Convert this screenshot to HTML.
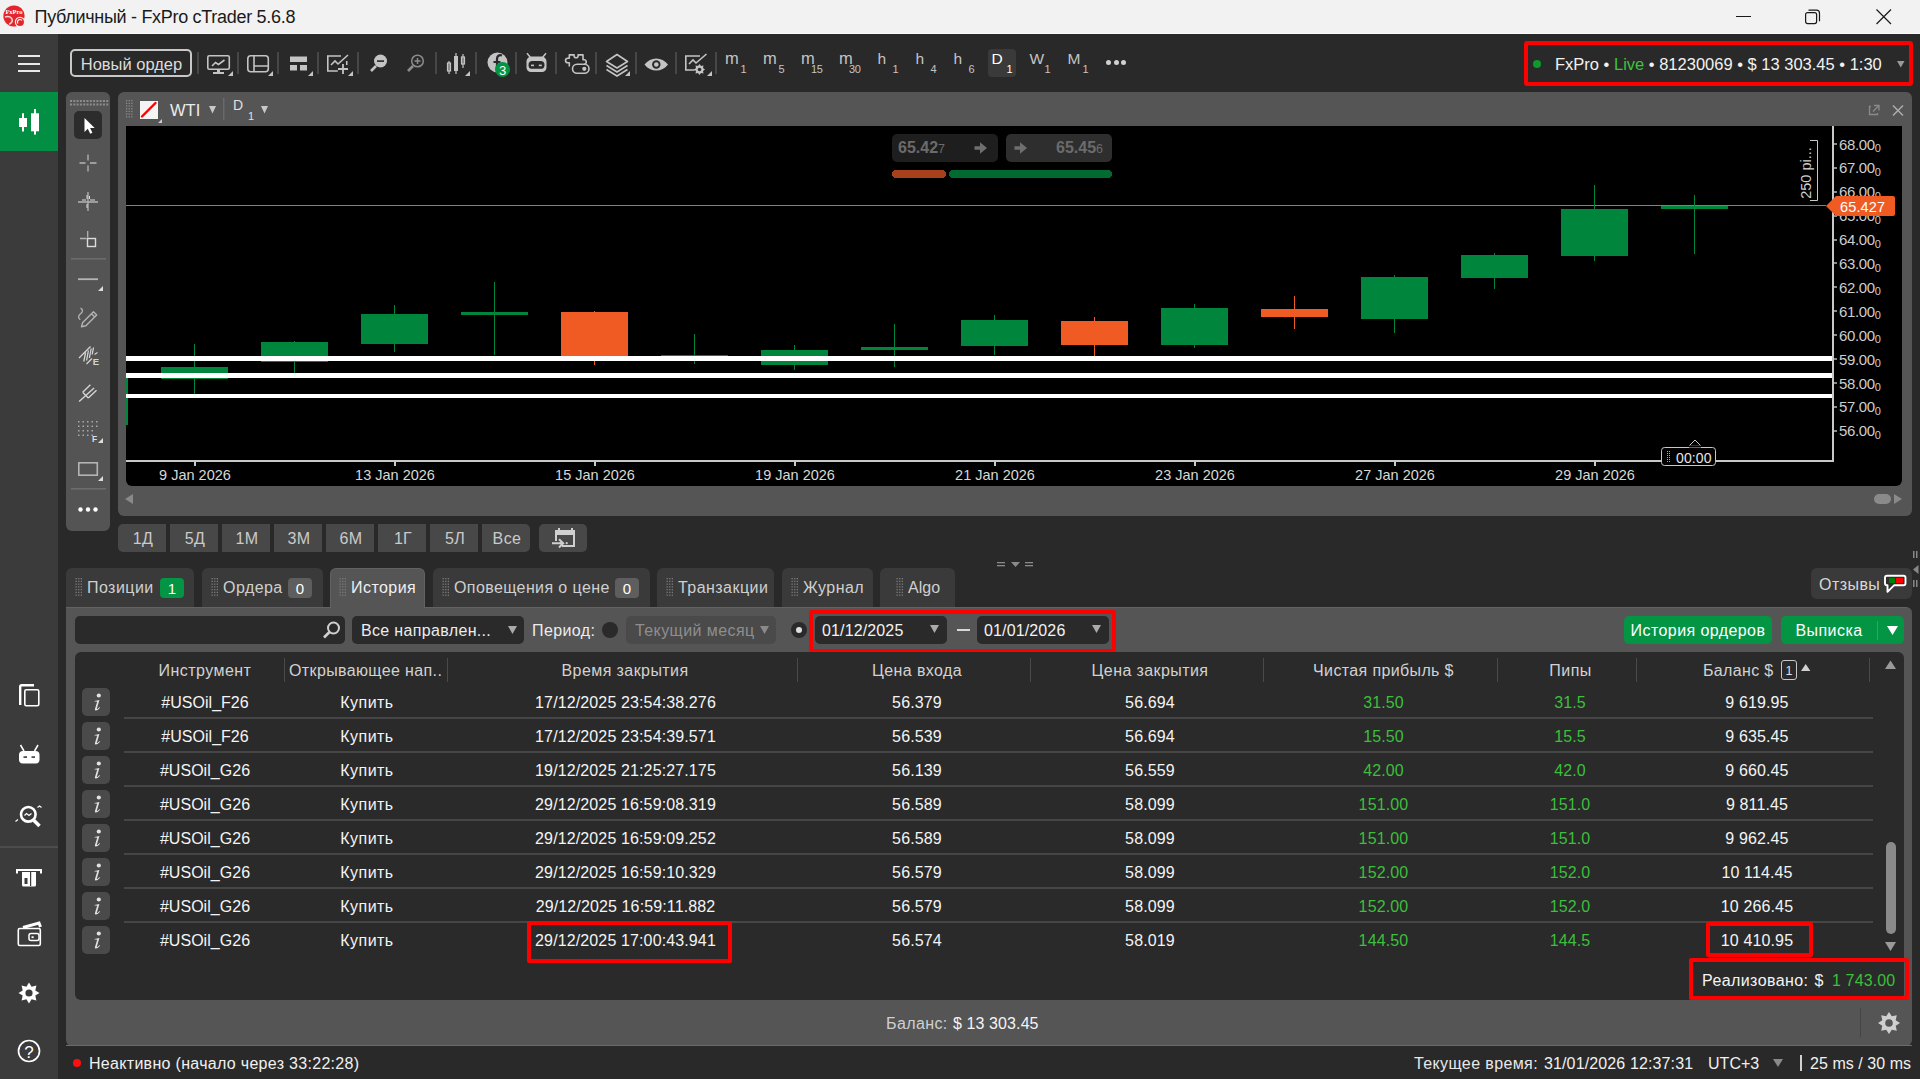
<!DOCTYPE html>
<html><head><meta charset="utf-8">
<style>
*{box-sizing:border-box;margin:0;padding:0}
html,body{width:1920px;height:1079px;overflow:hidden;background:#292929;font-family:"Liberation Sans",sans-serif;color:#e6e6e6}
.a{position:absolute}
.t{position:absolute;white-space:nowrap}
svg{position:absolute;overflow:visible}
</style></head><body>
<div class="a" style="left:0px;top:0px;width:1920px;height:33px;background:#f2f2f2;"></div>
<div class="a" style="left:0px;top:33px;width:1920px;height:1px;background:#fafafa;"></div>
<div class="t" style="left:34.5px;top:5.0px;height:24px;line-height:24px;font-size:18px;color:#1a1a1a;letter-spacing:-0.3px;">Публичный - FxPro cTrader 5.6.8</div>
<svg style="left:0;top:0" width="34" height="34" viewBox="0 0 34 34"><circle cx="14" cy="16.5" r="11" fill="#d9d9d9" opacity=".5"/><circle cx="14" cy="16" r="10.6" fill="#e3262b"/><text x="14" y="13.5" font-size="6.5" font-family="Liberation Serif" font-weight="bold" fill="#fff" text-anchor="middle">FxPro</text><path d="M5 17c3-1 6 0 7 2s-1 5-3 5" stroke="#f4d0d0" stroke-width="1.6" fill="none"/><circle cx="20" cy="22" r="4.6" fill="#e3262b" stroke="#f2f2f2" stroke-width="1.3"/><path d="M18 23.5a2.5 2.5 0 0 1 4-3" stroke="#fff" stroke-width="1.2" fill="none"/></svg>
<div class="a" style="left:1736px;top:16px;width:15px;height:1px;background:#1a1a1a;"></div>
<svg style="left:1805px;top:9px" width="16" height="16" viewBox="0 0 16 16"><rect x="0.6" y="3.6" width="11" height="11" rx="2" fill="none" stroke="#1a1a1a" stroke-width="1.2"/><path d="M3.5 1.2h8a3 3 0 0 1 3 3v8" fill="none" stroke="#1a1a1a" stroke-width="1.2"/></svg>
<svg style="left:1876px;top:9px" width="16" height="16" viewBox="0 0 16 16"><path d="M0.5 0.5L15 15M15 0.5L0.5 15" stroke="#1a1a1a" stroke-width="1.2"/></svg>
<div class="a" style="left:0px;top:34px;width:58px;height:1045px;background:#3b3b3b;"></div>
<div class="a" style="left:18px;top:55px;width:22px;height:2px;background:#e8e8e8;"></div>
<div class="a" style="left:18px;top:63px;width:22px;height:2px;background:#e8e8e8;"></div>
<div class="a" style="left:18px;top:70px;width:22px;height:2px;background:#e8e8e8;"></div>
<div class="a" style="left:0px;top:92px;width:58px;height:59px;background:#028f43;"></div>
<svg style="left:19px;top:109px" width="20" height="26" viewBox="0 0 20 26"><rect x="3" y="4.3" width="2" height="18.2" fill="#fff"/><rect x="0" y="9" width="8" height="9" fill="#fff"/><rect x="15" y="0" width="2" height="25.6" fill="#fff"/><rect x="12" y="4.3" width="8" height="18" fill="#fff"/></svg>
<svg style="left:0;top:0" width="58" height="1079" viewBox="0 0 58 1079"><path d="M20.2 705V686.5a1.3 1.3 0 0 1 1.3-1.3H34" stroke="#fff" stroke-width="2.4" fill="none"/><rect x="24.8" y="689.8" width="14" height="16" rx="1.5" stroke="#fff" stroke-width="1.6" fill="none"/><rect x="19" y="751" width="20.5" height="12.5" rx="4" fill="#fff"/><path d="M20.5 745l3.5 6M38 745l-3.5 6" stroke="#fff" stroke-width="1.5"/><rect x="23.5" y="756.3" width="3.5" height="1.6" fill="#3b3b3b"/><rect x="31.5" y="756.3" width="3.5" height="1.6" fill="#3b3b3b"/><circle cx="28.3" cy="814.3" r="7.3" stroke="#fff" stroke-width="2.6" fill="none"/><path d="M33.5 820l6 6" stroke="#fff" stroke-width="3.6"/><path d="M24.5 815.5l2-2 2.5 2 2.5-2" stroke="#fff" stroke-width="1.2" fill="none"/><path d="M15.5 821.5l2.5-2M37.5 807.5l2-1.5 2 1.5" stroke="#fff" stroke-width="1.1" fill="none"/><rect x="0" y="846" width="58" height="2" fill="#4c4c4c"/><path d="M17 873.5v-3.5h24v3.5" stroke="#fff" stroke-width="2" fill="none"/><path d="M22 872h14v13a1.5 1.5 0 0 1-1.5 1.5h-11A1.5 1.5 0 0 1 22 885z" fill="#fff"/><rect x="24.5" y="878" width="3" height="6" fill="#3b3b3b"/><rect x="30" y="872" width="1.2" height="14" fill="#3b3b3b"/><path d="M23 927.5l16-4.5 1.5 4" stroke="#fff" stroke-width="3" fill="none"/><rect x="18.3" y="928.5" width="22" height="17" rx="1.5" stroke="#fff" stroke-width="1.6" fill="#3b3b3b"/><rect x="29" y="933.5" width="10" height="7" rx="2" stroke="#fff" stroke-width="1.5" fill="#3b3b3b"/><rect x="31.5" y="936.3" width="2.2" height="1.8" fill="#fff"/><g transform="translate(29 993)"><path d="M0-10.5L2.6-6.3 7.4-7.4 6.3-2.6 10.5 0 6.3 2.6 7.4 7.4 2.6 6.3 0 10.5-2.6 6.3-7.4 7.4-6.3 2.6-10.5 0-6.3-2.6-7.4-7.4-2.6-6.3z" fill="#fff"/><circle r="3.6" fill="#3b3b3b"/></g><circle cx="29" cy="1051" r="10.5" stroke="#fff" stroke-width="1.7" fill="none"/><text x="29" y="1057.5" font-size="17" font-family="Liberation Sans" fill="#fff" text-anchor="middle">?</text></svg>
<div class="a" style="left:70px;top:49px;width:122px;height:28px;background:transparent;border:2px solid #c8c8c8;border-radius:5px"></div>
<div class="t" style="left:-68.5px;top:51.5px;height:24px;line-height:24px;font-size:16.5px;color:#dcdcdc;letter-spacing:0px;width:400px;text-align:center;">Новый ордер</div>
<div class="a" style="left:197px;top:52px;width:2px;height:22px;background:#474747;"></div>
<div class="a" style="left:237px;top:52px;width:2px;height:22px;background:#474747;"></div>
<div class="a" style="left:277px;top:52px;width:2px;height:22px;background:#474747;"></div>
<div class="a" style="left:317px;top:52px;width:2px;height:22px;background:#474747;"></div>
<div class="a" style="left:357px;top:52px;width:2px;height:22px;background:#474747;"></div>
<div class="a" style="left:435px;top:52px;width:2px;height:22px;background:#474747;"></div>
<div class="a" style="left:475px;top:52px;width:2px;height:22px;background:#474747;"></div>
<div class="a" style="left:515px;top:52px;width:2px;height:22px;background:#474747;"></div>
<div class="a" style="left:555px;top:52px;width:2px;height:22px;background:#474747;"></div>
<div class="a" style="left:595px;top:52px;width:2px;height:22px;background:#474747;"></div>
<div class="a" style="left:635px;top:52px;width:2px;height:22px;background:#474747;"></div>
<div class="a" style="left:675px;top:52px;width:2px;height:22px;background:#474747;"></div>
<div class="a" style="left:715px;top:52px;width:2px;height:22px;background:#474747;"></div>
<svg style="left:0;top:0" width="1200" height="92" viewBox="0 0 1200 92"><rect x="207.8" y="55.8" width="21.5" height="13.4" rx="1.5" stroke="#c4c4c4" stroke-width="1.6" fill="none"/><path d="M212 66l3.5-3.5 3 2 6-4.5" stroke="#c4c4c4" stroke-width="1.6" fill="none"/><rect x="217" y="69" width="3" height="3" fill="#c4c4c4"/><rect x="213" y="72" width="11" height="2" fill="#c4c4c4"/><path d="M228 76h5v-5z" fill="#c4c4c4"/><rect x="247.8" y="55.8" width="20.5" height="16" rx="3" stroke="#c4c4c4" stroke-width="1.6" fill="none"/><path d="M254 56v15.5M254 66h14" stroke="#c4c4c4" stroke-width="1.6"/><path d="M268 76h5v-5z" fill="#c4c4c4"/><rect x="290" y="56.5" width="17" height="5.5" fill="#c4c4c4"/><rect x="290" y="65" width="7" height="5.5" fill="#c4c4c4"/><rect x="300" y="65" width="7" height="5.5" fill="#c4c4c4"/><path d="M308 76h5v-5z" fill="#c4c4c4"/><path d="M341 56H327.8v15h10" stroke="#c4c4c4" stroke-width="1.6" fill="none"/><path d="M331 65l4-4 3 3 10-9" stroke="#c4c4c4" stroke-width="1.6" fill="none"/><path d="M343 64v10M338 69h10" stroke="#c4c4c4" stroke-width="1.8"/><rect x="346" y="61" width="1.5" height="4" fill="#c4c4c4"/><path d="M348 76h5v-5z" fill="#c4c4c4"/><circle cx="380.5" cy="61" r="6.5" fill="#c4c4c4"/><rect x="377" y="60.3" width="7" height="1.6" fill="#292929"/><path d="M376 66l-5 5" stroke="#c4c4c4" stroke-width="2.6"/><circle cx="417.5" cy="61" r="5.8" stroke="#8c8c8c" stroke-width="1.5" fill="none"/><path d="M414.5 61h6M417.5 58v6" stroke="#8c8c8c" stroke-width="1.5"/><path d="M413 66l-5 5" stroke="#8c8c8c" stroke-width="2.6"/><path d="M449 61v13M456 53v21M463 54v14" stroke="#c4c4c4" stroke-width="1.2"/><rect x="447.5" y="63" width="3" height="8" stroke="#c4c4c4" stroke-width="1.2" fill="none"/><rect x="454" y="56" width="4" height="15" fill="#c4c4c4"/><rect x="461.5" y="57" width="3" height="7" stroke="#c4c4c4" stroke-width="1.2" fill="none"/><path d="M465 76h5v-5z" fill="#c4c4c4"/><circle cx="497.5" cy="62.5" r="10" fill="#c4c4c4"/><path d="M502 55.5c-3-1-5 .5-5 3.5v11M493.5 62h7" stroke="#292929" stroke-width="2.2" fill="none"/><circle cx="502.5" cy="69.5" r="7.5" fill="#039444"/><text x="502.5" y="74.5" font-size="13" font-family="Liberation Sans" fill="#fff" text-anchor="middle">3</text><path d="M531.5 56.5h10a5 5 0 0 1 5 5v6a4.5 4.5 0 0 1-4.5 4.5h-11a4.5 4.5 0 0 1-4.5-4.5v-6a5 5 0 0 1 5-5z" fill="#c4c4c4"/><rect x="528.5" y="61" width="16" height="7.8" rx="3.9" fill="#292929"/><path d="M527 53.2l3.3 4M546 53.2l-3.3 4" stroke="#c4c4c4" stroke-width="1.5"/><rect x="531" y="64.6" width="3" height="1.6" fill="#c4c4c4"/><rect x="538.8" y="64.6" width="3" height="1.6" fill="#c4c4c4"/><path d="M569.3 66.5V62.8h-1.5a2.3 2.3 0 0 1 0-4.6h1.5v-3.3h4.8v.8a2 2 0 0 0 4 0v-.8h4.9v4.8h.8a2.3 2.3 0 0 1 .3 4.6" stroke="#c4c4c4" stroke-width="1.6" fill="none" stroke-linejoin="round"/><rect x="572.5" y="64.3" width="16.5" height="9" rx="4.5" stroke="#c4c4c4" stroke-width="1.6" fill="#292929"/><circle cx="584.3" cy="68.8" r="2.1" fill="#c4c4c4"/><path d="M606.5 61.5l10.5-7 10.5 7-10.5 6.5z" stroke="#c4c4c4" stroke-width="1.6" fill="none" stroke-linejoin="round"/><path d="M606.5 65.5l10.5 6.5 10.5-6.5M606.5 69.5l10.5 6.5 10.5-6.5" stroke="#c4c4c4" stroke-width="1.6" fill="none"/><path d="M625 76h5v-5z" fill="#c4c4c4"/><path d="M644.5 64.5c6-8 17.5-8 23.5 0-6 8-17.5 8-23.5 0z" fill="#c4c4c4"/><circle cx="656.3" cy="64.5" r="4.2" fill="#292929"/><circle cx="656.3" cy="64.5" r="2.3" fill="#c4c4c4"/><path d="M700 56H685.8v14h9" stroke="#c4c4c4" stroke-width="1.6" fill="none"/><path d="M689 64l4-4 3 3 10.5-9" stroke="#c4c4c4" stroke-width="1.6" fill="none"/><g transform="translate(699.5 69.5)"><path d="M0-5.5L1.5-3.5 4-4 3.5-1.5 5.5 0 3.5 1.5 4 4 1.5 3.5 0 5.5-1.5 3.5-4 4-3.5 1.5-5.5 0-3.5-1.5-4-4-1.5-3.5z" fill="#c4c4c4"/><circle r="1.8" fill="#292929"/></g><path d="M707 76h5v-5z" fill="#c4c4c4"/></svg>
<div class="a" style="left:988px;top:49px;width:28px;height:28px;background:#3a3a3a;border-radius:4px"></div>
<div class="t" style="left:725px;top:46.0px;height:24px;line-height:24px;font-size:16.5px;color:#c4c4c4;letter-spacing:0px;">m</div>
<div class="t" style="left:740.5px;top:56.8px;height:24px;line-height:24px;font-size:11px;color:#c4c4c4;letter-spacing:0px;">1</div>
<div class="t" style="left:763px;top:46.0px;height:24px;line-height:24px;font-size:16.5px;color:#c4c4c4;letter-spacing:0px;">m</div>
<div class="t" style="left:778.5px;top:56.8px;height:24px;line-height:24px;font-size:11px;color:#c4c4c4;letter-spacing:0px;">5</div>
<div class="t" style="left:801px;top:46.0px;height:24px;line-height:24px;font-size:16.5px;color:#c4c4c4;letter-spacing:0px;">m</div>
<div class="t" style="left:811px;top:56.8px;height:24px;line-height:24px;font-size:11px;color:#c4c4c4;letter-spacing:-0.4px;">15</div>
<div class="t" style="left:839px;top:46.0px;height:24px;line-height:24px;font-size:16.5px;color:#c4c4c4;letter-spacing:0px;">m</div>
<div class="t" style="left:849px;top:56.8px;height:24px;line-height:24px;font-size:11px;color:#c4c4c4;letter-spacing:-0.4px;">30</div>
<div class="t" style="left:877.5px;top:46.5px;height:24px;line-height:24px;font-size:15.5px;color:#c4c4c4;letter-spacing:0px;">h</div>
<div class="t" style="left:892.5px;top:56.8px;height:24px;line-height:24px;font-size:11px;color:#c4c4c4;letter-spacing:0px;">1</div>
<div class="t" style="left:915.5px;top:46.5px;height:24px;line-height:24px;font-size:15.5px;color:#c4c4c4;letter-spacing:0px;">h</div>
<div class="t" style="left:930.5px;top:56.8px;height:24px;line-height:24px;font-size:11px;color:#c4c4c4;letter-spacing:0px;">4</div>
<div class="t" style="left:953.5px;top:46.5px;height:24px;line-height:24px;font-size:15.5px;color:#c4c4c4;letter-spacing:0px;">h</div>
<div class="t" style="left:968.5px;top:56.8px;height:24px;line-height:24px;font-size:11px;color:#c4c4c4;letter-spacing:0px;">6</div>
<div class="t" style="left:991.5px;top:46.5px;height:24px;line-height:24px;font-size:15.5px;color:#ffffff;letter-spacing:0px;">D</div>
<div class="t" style="left:1006.5px;top:56.8px;height:24px;line-height:24px;font-size:11px;color:#ffffff;letter-spacing:0px;">1</div>
<div class="t" style="left:1029.5px;top:46.5px;height:24px;line-height:24px;font-size:15.5px;color:#c4c4c4;letter-spacing:0px;">W</div>
<div class="t" style="left:1044.5px;top:56.8px;height:24px;line-height:24px;font-size:11px;color:#c4c4c4;letter-spacing:0px;">1</div>
<div class="t" style="left:1067.5px;top:46.5px;height:24px;line-height:24px;font-size:15.5px;color:#c4c4c4;letter-spacing:0px;">M</div>
<div class="t" style="left:1082.5px;top:56.8px;height:24px;line-height:24px;font-size:11px;color:#c4c4c4;letter-spacing:0px;">1</div>
<div class="a" style="left:1106.0px;top:59.5px;width:5px;height:5px;border-radius:50%;background:#d0d0d0"></div>
<div class="a" style="left:1113.5px;top:59.5px;width:5px;height:5px;border-radius:50%;background:#d0d0d0"></div>
<div class="a" style="left:1121.0px;top:59.5px;width:5px;height:5px;border-radius:50%;background:#d0d0d0"></div>
<div class="a" style="left:1524px;top:41px;width:389px;height:45px;background:transparent;border:4px solid #ff0000;border-radius:3px"></div>
<div class="a" style="left:1533px;top:60px;width:8px;height:8px;border-radius:50%;background:#0c9a2c"></div>
<div class="t" style="left:1555px;top:52.0px;height:24px;line-height:24px;font-size:16.5px;color:#f2f2f2;letter-spacing:0px;">FxPro • <span style="color:#3ec43e">Live</span> • 81230069 • $ 13 303.45 • 1:30</div>
<svg style="left:1897px;top:61px" width="8" height="7"><path d="M0 0h7.5L3.75 6.5z" fill="#9a9a9a"/></svg>
<div class="a" style="left:66px;top:92px;width:44px;height:439px;background:#545454;border-radius:6px"></div>
<svg style="left:0;top:0" width="120" height="540" viewBox="0 0 120 540"><rect x="70.0" y="100" width="2" height="2" fill="#8c8c8c"/><rect x="70.0" y="103.5" width="2" height="2" fill="#8c8c8c"/><rect x="73.3" y="100" width="2" height="2" fill="#8c8c8c"/><rect x="73.3" y="103.5" width="2" height="2" fill="#8c8c8c"/><rect x="76.6" y="100" width="2" height="2" fill="#8c8c8c"/><rect x="76.6" y="103.5" width="2" height="2" fill="#8c8c8c"/><rect x="79.9" y="100" width="2" height="2" fill="#8c8c8c"/><rect x="79.9" y="103.5" width="2" height="2" fill="#8c8c8c"/><rect x="83.2" y="100" width="2" height="2" fill="#8c8c8c"/><rect x="83.2" y="103.5" width="2" height="2" fill="#8c8c8c"/><rect x="86.5" y="100" width="2" height="2" fill="#8c8c8c"/><rect x="86.5" y="103.5" width="2" height="2" fill="#8c8c8c"/><rect x="89.8" y="100" width="2" height="2" fill="#8c8c8c"/><rect x="89.8" y="103.5" width="2" height="2" fill="#8c8c8c"/><rect x="93.1" y="100" width="2" height="2" fill="#8c8c8c"/><rect x="93.1" y="103.5" width="2" height="2" fill="#8c8c8c"/><rect x="96.4" y="100" width="2" height="2" fill="#8c8c8c"/><rect x="96.4" y="103.5" width="2" height="2" fill="#8c8c8c"/><rect x="99.7" y="100" width="2" height="2" fill="#8c8c8c"/><rect x="99.7" y="103.5" width="2" height="2" fill="#8c8c8c"/><rect x="103.0" y="100" width="2" height="2" fill="#8c8c8c"/><rect x="103.0" y="103.5" width="2" height="2" fill="#8c8c8c"/><rect x="106.3" y="100" width="2" height="2" fill="#8c8c8c"/><rect x="106.3" y="103.5" width="2" height="2" fill="#8c8c8c"/><rect x="74" y="111" width="28" height="28" rx="5" fill="#2c2c2c"/><path d="M84.5 118v14l3.3-3.3 2.4 5 2.2-1-2.3-4.8h4.6z" fill="#fff"/><path d="M79.5 163h6M90 163h6.5M88 154.5v6M88 165.5v6" stroke="#b4b4b4" stroke-width="1.3"/><path d="M78 202h20M88 192v19" stroke="#b4b4b4" stroke-width="1.3"/><path d="M82 200h4M90 200h5M87 195v4M87 204v4M89.5 196v3" stroke="#ddd" stroke-width="1"/><path d="M80 238.5h6.5M87.7 231v6.5" stroke="#b4b4b4" stroke-width="1.3"/><rect x="87.5" y="238.5" width="8" height="8" stroke="#ddd" stroke-width="1.4" fill="none"/><rect x="71" y="258" width="35" height="1.6" fill="#6c6c6c"/><rect x="78" y="278.3" width="20" height="1.8" fill="#b4b4b4"/><path d="M98 291h5v-5z" fill="#ddd"/><path d="M80.5 308.2c3 1.5 2.5 4-.5 6-2 1.5-1.8 4 .3 5.5" stroke="#b4b4b4" stroke-width="1.3" fill="none"/><path d="M81.5 326.8l1.2-4.3 10.8-10.8 3.2 3.2-10.8 10.8z M91.5 313.7l3.2 3.2" stroke="#b4b4b4" stroke-width="1.4" fill="none" stroke-linejoin="round"/><path d="M79 358l11.5-11.5M86.5 364l5.5-5.5M83.8 361.5l1.8-9M86.6 360.5l1.8-10M89.4 358l1.8-9.5M92.2 354.5l1.3-7" stroke="#d4d4d4" stroke-width="1.3"/><path d="M94.5 354.5l3-2" stroke="#d4d4d4" stroke-width="1.1"/><text x="92.8" y="364.5" font-size="9.5" font-family="Liberation Sans" font-weight="bold" fill="#d4d4d4">E</text><path d="M79.1 401.5l15-13.6M82.7 392.3l5.6 5.7M82.7 392.3l7.7-7.6M88.3 398l8.2-7.7" stroke="#d4d4d4" stroke-width="1.4" fill="none"/><rect x="78.0" y="421.0" width="1.5" height="1.5" fill="#aaa"/><rect x="82.5" y="421.0" width="1.5" height="1.5" fill="#aaa"/><rect x="87.0" y="421.0" width="1.5" height="1.5" fill="#aaa"/><rect x="91.5" y="421.0" width="1.5" height="1.5" fill="#aaa"/><rect x="96.0" y="421.0" width="1.5" height="1.5" fill="#aaa"/><rect x="78.0" y="425.5" width="1.5" height="1.5" fill="#aaa"/><rect x="82.5" y="425.5" width="1.5" height="1.5" fill="#aaa"/><rect x="87.0" y="425.5" width="1.5" height="1.5" fill="#aaa"/><rect x="91.5" y="425.5" width="1.5" height="1.5" fill="#aaa"/><rect x="96.0" y="425.5" width="1.5" height="1.5" fill="#aaa"/><rect x="78.0" y="430.0" width="1.5" height="1.5" fill="#aaa"/><rect x="82.5" y="430.0" width="1.5" height="1.5" fill="#aaa"/><rect x="87.0" y="430.0" width="1.5" height="1.5" fill="#aaa"/><rect x="91.5" y="430.0" width="1.5" height="1.5" fill="#aaa"/><rect x="78.0" y="434.5" width="1.5" height="1.5" fill="#aaa"/><rect x="82.5" y="434.5" width="1.5" height="1.5" fill="#aaa"/><rect x="87.0" y="434.5" width="1.5" height="1.5" fill="#aaa"/><rect x="91.5" y="434.5" width="1.5" height="1.5" fill="#aaa"/><text x="92" y="442" font-size="8.5" font-family="Liberation Sans" font-weight="bold" fill="#ddd">F</text><path d="M98 443h5v-5z" fill="#ddd"/><rect x="78.8" y="462.8" width="18.5" height="12.4" stroke="#b4b4b4" stroke-width="1.6" fill="none"/><path d="M98 481h5v-5z" fill="#ddd"/><rect x="71" y="488" width="35" height="1.6" fill="#6c6c6c"/><circle cx="80.5" cy="509.5" r="2.2" fill="#fff"/><circle cx="88" cy="509.5" r="2.2" fill="#fff"/><circle cx="95.5" cy="509.5" r="2.2" fill="#fff"/></svg>
<div class="a" style="left:118px;top:92px;width:1794px;height:424px;background:#555555;border-radius:6px"></div>
<svg style="left:0;top:0" width="1920" height="130" viewBox="0 0 1920 130"><rect x="126.0" y="100.0" width="1.3" height="1.3" fill="#8a8a8a"/><rect x="126.0" y="102.7" width="1.3" height="1.3" fill="#8a8a8a"/><rect x="126.0" y="105.4" width="1.3" height="1.3" fill="#8a8a8a"/><rect x="126.0" y="108.1" width="1.3" height="1.3" fill="#8a8a8a"/><rect x="126.0" y="110.8" width="1.3" height="1.3" fill="#8a8a8a"/><rect x="126.0" y="113.5" width="1.3" height="1.3" fill="#8a8a8a"/><rect x="126.0" y="116.2" width="1.3" height="1.3" fill="#8a8a8a"/><rect x="128.6" y="100.0" width="1.3" height="1.3" fill="#8a8a8a"/><rect x="128.6" y="102.7" width="1.3" height="1.3" fill="#8a8a8a"/><rect x="128.6" y="105.4" width="1.3" height="1.3" fill="#8a8a8a"/><rect x="128.6" y="108.1" width="1.3" height="1.3" fill="#8a8a8a"/><rect x="128.6" y="110.8" width="1.3" height="1.3" fill="#8a8a8a"/><rect x="128.6" y="113.5" width="1.3" height="1.3" fill="#8a8a8a"/><rect x="128.6" y="116.2" width="1.3" height="1.3" fill="#8a8a8a"/><rect x="131.2" y="100.0" width="1.3" height="1.3" fill="#8a8a8a"/><rect x="131.2" y="102.7" width="1.3" height="1.3" fill="#8a8a8a"/><rect x="131.2" y="105.4" width="1.3" height="1.3" fill="#8a8a8a"/><rect x="131.2" y="108.1" width="1.3" height="1.3" fill="#8a8a8a"/><rect x="131.2" y="110.8" width="1.3" height="1.3" fill="#8a8a8a"/><rect x="131.2" y="113.5" width="1.3" height="1.3" fill="#8a8a8a"/><rect x="131.2" y="116.2" width="1.3" height="1.3" fill="#8a8a8a"/><rect x="140" y="101" width="18" height="18" fill="#f4f4f4"/><path d="M142 116.5l13.5-13.5" stroke="#ff0000" stroke-width="2.4" stroke-linecap="round"/><path d="M158 123h4v-4z" fill="#ccc"/><path d="M209 106h7l-3.5 7.5z" fill="#c8c8c8"/><rect x="223" y="98" width="1.5" height="22" fill="#6a6a6a"/><path d="M261 106h7l-3.5 7.5z" fill="#c8c8c8"/><path d="M1871 106.5h-1.5v8h8V113M1874 105.5h5v5M1879 105.5l-6 6" stroke="#8a8a8a" stroke-width="1.3" fill="none"/><path d="M1893 105.5l10 10M1903 105.5l-10 10" stroke="#aaaaaa" stroke-width="1.6"/></svg>
<div class="t" style="left:170px;top:98.0px;height:24px;line-height:24px;font-size:16.5px;color:#ececec;letter-spacing:0.0px;">WTI</div>
<div class="t" style="left:233px;top:93.0px;height:24px;line-height:24px;font-size:14px;color:#e0e0e0;letter-spacing:0.0px;">D</div>
<div class="t" style="left:248px;top:104.0px;height:24px;line-height:24px;font-size:11px;color:#e0e0e0;letter-spacing:0px;">1</div>
<div class="a" style="left:126px;top:126px;width:1776px;height:360px;background:#000;border-radius:0 0 6px 6px"></div>
<svg style="left:0;top:0" width="1920" height="520" viewBox="0 0 1920 520" shape-rendering="crispEdges"><rect x="126" y="205" width="1700" height="1" fill="#f05b24"/><rect x="194" y="344" width="1" height="50" fill="#00853d"/><rect x="161" y="367" width="67" height="12" fill="#00853d"/><rect x="294" y="341" width="1" height="32" fill="#00853d"/><rect x="261" y="342" width="67" height="20" fill="#00853d"/><rect x="394" y="305" width="1" height="47" fill="#00853d"/><rect x="361" y="314" width="67" height="30" fill="#00853d"/><rect x="494" y="282" width="1" height="73" fill="#00853d"/><rect x="461" y="312" width="67" height="3" fill="#00853d"/><rect x="594" y="311" width="1" height="54" fill="#f05b24"/><rect x="561" y="312" width="67" height="44" fill="#f05b24"/><rect x="694" y="334" width="1" height="30" fill="#00853d"/><rect x="661" y="355" width="67" height="2" fill="#00853d"/><rect x="794" y="345" width="1" height="25" fill="#00853d"/><rect x="761" y="350" width="67" height="15" fill="#00853d"/><rect x="894" y="324" width="1" height="43" fill="#00853d"/><rect x="861" y="347" width="67" height="3" fill="#00853d"/><rect x="994" y="315" width="1" height="40" fill="#00853d"/><rect x="961" y="320" width="67" height="26" fill="#00853d"/><rect x="1094" y="317" width="1" height="39" fill="#f05b24"/><rect x="1061" y="321" width="67" height="24" fill="#f05b24"/><rect x="1194" y="304" width="1" height="44" fill="#00853d"/><rect x="1161" y="308" width="67" height="37" fill="#00853d"/><rect x="1294" y="296" width="1" height="33" fill="#f05b24"/><rect x="1261" y="309" width="67" height="8" fill="#f05b24"/><rect x="1394" y="275" width="1" height="58" fill="#00853d"/><rect x="1361" y="277" width="67" height="42" fill="#00853d"/><rect x="1494" y="253" width="1" height="36" fill="#00853d"/><rect x="1461" y="255" width="67" height="23" fill="#00853d"/><rect x="1594" y="185" width="1" height="76" fill="#00853d"/><rect x="1561" y="209" width="67" height="47" fill="#00853d"/><rect x="1694" y="195" width="1" height="59" fill="#00853d"/><rect x="1661" y="206" width="67" height="3" fill="#00853d"/><rect x="126" y="378" width="2" height="47" fill="#00853d"/><rect x="126" y="356" width="1707" height="5" fill="#fff"/><rect x="126" y="373" width="1707" height="5" fill="#fff"/><rect x="126" y="394" width="1707" height="4" fill="#fff"/><rect x="1832" y="126" width="2" height="336" fill="#c8c8c8"/><rect x="126" y="460" width="1708" height="2" fill="#c8c8c8"/><rect x="1834" y="143" width="3" height="2" fill="#8a8a8a"/><rect x="1834" y="167" width="3" height="2" fill="#8a8a8a"/><rect x="1834" y="191" width="3" height="2" fill="#8a8a8a"/><rect x="1834" y="215" width="3" height="2" fill="#8a8a8a"/><rect x="1834" y="239" width="3" height="2" fill="#8a8a8a"/><rect x="1834" y="262" width="3" height="2" fill="#8a8a8a"/><rect x="1834" y="286" width="3" height="2" fill="#8a8a8a"/><rect x="1834" y="310" width="3" height="2" fill="#8a8a8a"/><rect x="1834" y="334" width="3" height="2" fill="#8a8a8a"/><rect x="1834" y="358" width="3" height="2" fill="#8a8a8a"/><rect x="1834" y="382" width="3" height="2" fill="#8a8a8a"/><rect x="1834" y="406" width="3" height="2" fill="#8a8a8a"/><rect x="1834" y="430" width="3" height="2" fill="#8a8a8a"/><rect x="194" y="462" width="2" height="4" fill="#c8c8c8"/><rect x="394" y="462" width="2" height="4" fill="#c8c8c8"/><rect x="594" y="462" width="2" height="4" fill="#c8c8c8"/><rect x="794" y="462" width="2" height="4" fill="#c8c8c8"/><rect x="994" y="462" width="2" height="4" fill="#c8c8c8"/><rect x="1194" y="462" width="2" height="4" fill="#c8c8c8"/><rect x="1394" y="462" width="2" height="4" fill="#c8c8c8"/><rect x="1594" y="462" width="2" height="4" fill="#c8c8c8"/><rect x="892" y="170" width="54" height="8" rx="4" fill="#a8401b"/><rect x="949" y="170" width="163" height="8" rx="4" fill="#006b31"/></svg>
<div class="a" style="left:892px;top:134px;width:106px;height:28px;background:#1e1e1e;border-radius:5px"></div>
<div class="a" style="left:1006px;top:134px;width:106px;height:28px;background:#2e2e2e;border-radius:5px"></div>
<div class="t" style="left:898px;top:135.5px;height:24px;line-height:24px;font-size:16px;color:#6b6b6b;letter-spacing:0px;font-weight:bold">65.42<span style="font-size:12.5px;font-weight:normal;letter-spacing:0">7</span></div>
<div class="t" style="left:703px;top:135.5px;height:24px;line-height:24px;font-size:16px;color:#6b6b6b;letter-spacing:0px;width:400px;text-align:right;font-weight:bold">65.45<span style="font-size:12.5px;font-weight:normal;letter-spacing:0">6</span></div>
<svg style="left:0;top:0" width="1200" height="200"><path d="M974.5 146.2h5.5v-4l7 5.8-7 5.8v-4h-5.5z" fill="#6f6f6f"/><path d="M1014.5 146.2h5.5v-4l7 5.8-7 5.8v-4h-5.5z" fill="#6f6f6f"/></svg>
<div class="t" style="left:1839px;top:132.5px;height:24px;line-height:24px;font-size:15px;color:#cdcdcd;letter-spacing:-0.35px;">68.00<span style="font-size:11px;position:relative;top:2.5px;letter-spacing:0">0</span></div>
<div class="t" style="left:1839px;top:156.4px;height:24px;line-height:24px;font-size:15px;color:#cdcdcd;letter-spacing:-0.35px;">67.00<span style="font-size:11px;position:relative;top:2.5px;letter-spacing:0">0</span></div>
<div class="t" style="left:1839px;top:180.3px;height:24px;line-height:24px;font-size:15px;color:#cdcdcd;letter-spacing:-0.35px;">66.00<span style="font-size:11px;position:relative;top:2.5px;letter-spacing:0">0</span></div>
<div class="t" style="left:1839px;top:204.2px;height:24px;line-height:24px;font-size:15px;color:#cdcdcd;letter-spacing:-0.35px;">65.00<span style="font-size:11px;position:relative;top:2.5px;letter-spacing:0">0</span></div>
<div class="t" style="left:1839px;top:228.1px;height:24px;line-height:24px;font-size:15px;color:#cdcdcd;letter-spacing:-0.35px;">64.00<span style="font-size:11px;position:relative;top:2.5px;letter-spacing:0">0</span></div>
<div class="t" style="left:1839px;top:252.0px;height:24px;line-height:24px;font-size:15px;color:#cdcdcd;letter-spacing:-0.35px;">63.00<span style="font-size:11px;position:relative;top:2.5px;letter-spacing:0">0</span></div>
<div class="t" style="left:1839px;top:275.9px;height:24px;line-height:24px;font-size:15px;color:#cdcdcd;letter-spacing:-0.35px;">62.00<span style="font-size:11px;position:relative;top:2.5px;letter-spacing:0">0</span></div>
<div class="t" style="left:1839px;top:299.79999999999995px;height:24px;line-height:24px;font-size:15px;color:#cdcdcd;letter-spacing:-0.35px;">61.00<span style="font-size:11px;position:relative;top:2.5px;letter-spacing:0">0</span></div>
<div class="t" style="left:1839px;top:323.7px;height:24px;line-height:24px;font-size:15px;color:#cdcdcd;letter-spacing:-0.35px;">60.00<span style="font-size:11px;position:relative;top:2.5px;letter-spacing:0">0</span></div>
<div class="t" style="left:1839px;top:347.6px;height:24px;line-height:24px;font-size:15px;color:#cdcdcd;letter-spacing:-0.35px;">59.00<span style="font-size:11px;position:relative;top:2.5px;letter-spacing:0">0</span></div>
<div class="t" style="left:1839px;top:371.5px;height:24px;line-height:24px;font-size:15px;color:#cdcdcd;letter-spacing:-0.35px;">58.00<span style="font-size:11px;position:relative;top:2.5px;letter-spacing:0">0</span></div>
<div class="t" style="left:1839px;top:395.4px;height:24px;line-height:24px;font-size:15px;color:#cdcdcd;letter-spacing:-0.35px;">57.00<span style="font-size:11px;position:relative;top:2.5px;letter-spacing:0">0</span></div>
<div class="t" style="left:1839px;top:419.29999999999995px;height:24px;line-height:24px;font-size:15px;color:#cdcdcd;letter-spacing:-0.35px;">56.00<span style="font-size:11px;position:relative;top:2.5px;letter-spacing:0">0</span></div>
<div class="t" style="left:95.0px;top:462.5px;height:24px;line-height:24px;font-size:14.5px;color:#d8d8d8;letter-spacing:0px;width:200px;text-align:center;">9 Jan 2026</div>
<div class="t" style="left:295.0px;top:462.5px;height:24px;line-height:24px;font-size:14.5px;color:#d8d8d8;letter-spacing:0px;width:200px;text-align:center;">13 Jan 2026</div>
<div class="t" style="left:495.0px;top:462.5px;height:24px;line-height:24px;font-size:14.5px;color:#d8d8d8;letter-spacing:0px;width:200px;text-align:center;">15 Jan 2026</div>
<div class="t" style="left:695.0px;top:462.5px;height:24px;line-height:24px;font-size:14.5px;color:#d8d8d8;letter-spacing:0px;width:200px;text-align:center;">19 Jan 2026</div>
<div class="t" style="left:895.0px;top:462.5px;height:24px;line-height:24px;font-size:14.5px;color:#d8d8d8;letter-spacing:0px;width:200px;text-align:center;">21 Jan 2026</div>
<div class="t" style="left:1095.0px;top:462.5px;height:24px;line-height:24px;font-size:14.5px;color:#d8d8d8;letter-spacing:0px;width:200px;text-align:center;">23 Jan 2026</div>
<div class="t" style="left:1295.0px;top:462.5px;height:24px;line-height:24px;font-size:14.5px;color:#d8d8d8;letter-spacing:0px;width:200px;text-align:center;">27 Jan 2026</div>
<div class="t" style="left:1495.0px;top:462.5px;height:24px;line-height:24px;font-size:14.5px;color:#d8d8d8;letter-spacing:0px;width:200px;text-align:center;">29 Jan 2026</div>
<svg style="left:1824px;top:195px" width="72" height="22" viewBox="0 0 72 22"><path d="M2 11L12 1h57a2 2 0 0 1 2 2v16a2 2 0 0 1-2 2H12z" fill="#f05b24"/></svg>
<div class="t" style="left:1840px;top:195.0px;height:24px;line-height:24px;font-size:14.5px;color:#ffffff;letter-spacing:0.128px;">65.427</div>
<svg style="left:0;top:0" width="1920" height="520"><path d="M1810 140.5h7.5v60h-7.5" stroke="#c8c8c8" stroke-width="1" fill="none"/><path d="M1695 440l-6 6h12z" fill="#000" stroke="#c8c8c8" stroke-width="1"/><rect x="1661.5" y="447.5" width="54" height="18" rx="3" fill="#000" stroke="#c8c8c8" stroke-width="1"/><path d="M1689 446.5h12" stroke="#000" stroke-width="2"/><rect x="1667" y="451" width="1" height="1" fill="#aaa"/><rect x="1667" y="453" width="1" height="1" fill="#aaa"/><rect x="1667" y="455" width="1" height="1" fill="#aaa"/><rect x="1667" y="457" width="1" height="1" fill="#aaa"/><rect x="1667" y="459" width="1" height="1" fill="#aaa"/><rect x="1667" y="461" width="1" height="1" fill="#aaa"/><rect x="1669" y="451" width="1" height="1" fill="#aaa"/><rect x="1669" y="453" width="1" height="1" fill="#aaa"/><rect x="1669" y="455" width="1" height="1" fill="#aaa"/><rect x="1669" y="457" width="1" height="1" fill="#aaa"/><rect x="1669" y="459" width="1" height="1" fill="#aaa"/><rect x="1669" y="461" width="1" height="1" fill="#aaa"/><path d="M125 499l8-5v10z" fill="#8a8a8a"/><rect x="1874" y="494" width="17" height="10" rx="5" fill="#8a8a8a"/><path d="M1902 499l-8-5v10z" fill="#8a8a8a"/></svg>
<div class="t" style="left:1765.5px;top:162.8px;width:80px;height:20px;line-height:20px;font-size:14.5px;color:#cfcfcf;text-align:center;transform:rotate(-90deg);transform-origin:40px 10px">250 pi...</div>
<div class="t" style="left:1676px;top:446.0px;height:24px;line-height:24px;font-size:14px;color:#e8e8e8;letter-spacing:0.119px;">00:00</div>
<div class="a" style="left:118px;top:524px;width:48px;height:28px;background:#484848;border-radius:5px 0 0 5px"></div>
<div class="t" style="left:119.0px;top:527.0px;height:24px;line-height:24px;font-size:16px;color:#cacaca;letter-spacing:0.31px;width:48px;text-align:center;">1Д</div>
<div class="a" style="left:170px;top:524px;width:48px;height:28px;background:#484848;border-radius:0"></div>
<div class="t" style="left:171.0px;top:527.0px;height:24px;line-height:24px;font-size:16px;color:#cacaca;letter-spacing:0.31px;width:48px;text-align:center;">5Д</div>
<div class="a" style="left:222px;top:524px;width:48px;height:28px;background:#484848;border-radius:0"></div>
<div class="t" style="left:223.0px;top:527.0px;height:24px;line-height:24px;font-size:16px;color:#cacaca;letter-spacing:0.31px;width:48px;text-align:center;">1М</div>
<div class="a" style="left:274px;top:524px;width:48px;height:28px;background:#484848;border-radius:0"></div>
<div class="t" style="left:275.0px;top:527.0px;height:24px;line-height:24px;font-size:16px;color:#cacaca;letter-spacing:0.31px;width:48px;text-align:center;">3М</div>
<div class="a" style="left:326px;top:524px;width:48px;height:28px;background:#484848;border-radius:0"></div>
<div class="t" style="left:327.0px;top:527.0px;height:24px;line-height:24px;font-size:16px;color:#cacaca;letter-spacing:0.31px;width:48px;text-align:center;">6М</div>
<div class="a" style="left:378px;top:524px;width:48px;height:28px;background:#484848;border-radius:0"></div>
<div class="t" style="left:379.0px;top:527.0px;height:24px;line-height:24px;font-size:16px;color:#cacaca;letter-spacing:0.31px;width:48px;text-align:center;">1Г</div>
<div class="a" style="left:430px;top:524px;width:48px;height:28px;background:#484848;border-radius:0"></div>
<div class="t" style="left:431.0px;top:527.0px;height:24px;line-height:24px;font-size:16px;color:#cacaca;letter-spacing:0.31px;width:48px;text-align:center;">5Л</div>
<div class="a" style="left:482px;top:524px;width:48px;height:28px;background:#484848;border-radius:0 5px 5px 0"></div>
<div class="t" style="left:483.0px;top:527.0px;height:24px;line-height:24px;font-size:16px;color:#cacaca;letter-spacing:0.45px;width:48px;text-align:center;">Все</div>
<div class="a" style="left:539px;top:524px;width:48px;height:28px;background:#484848;border-radius:5px"></div>
<svg style="left:0;top:0" width="600" height="560" shape-rendering="crispEdges"><rect x="555" y="530" width="20" height="5" fill="#cfcfcf"/><rect x="555" y="530" width="2" height="11" fill="#cfcfcf"/><rect x="573" y="530" width="2" height="17" fill="#cfcfcf"/><rect x="562" y="545" width="13" height="2" fill="#cfcfcf"/><rect x="558" y="528" width="2" height="2" fill="#cfcfcf"/><rect x="571" y="528" width="2" height="2" fill="#cfcfcf"/></svg><svg style="left:0;top:0" width="600" height="560"><path d="M552 543.3h11M559 539.2l4.2 4.1-4.2 4.2" stroke="#cfcfcf" stroke-width="2" fill="none"/><circle cx="566.7" cy="543.2" r="1.1" fill="#cfcfcf"/></svg>
<svg style="left:0;top:0" width="1100" height="600"><rect x="997" y="562" width="8" height="1.3" fill="#8a8a8a"/><rect x="997" y="565" width="8" height="1.3" fill="#8a8a8a"/><path d="M1011 562h9l-4.5 5z" fill="#8a8a8a"/><rect x="1025" y="562" width="8" height="1.3" fill="#8a8a8a"/><rect x="1025" y="565" width="8" height="1.3" fill="#8a8a8a"/></svg>
<div class="a" style="left:66px;top:568px;width:128px;height:39px;background:#3a3a3a;border-radius:6px 6px 0 0"></div>
<div class="t" style="left:87px;top:576.0px;height:24px;line-height:24px;font-size:16px;color:#cfcfcf;letter-spacing:0.45px;">Позиции</div>
<div class="a" style="left:160px;top:578px;width:24px;height:20px;background:#039444;border-radius:4px"></div>
<div class="t" style="left:160.0px;top:577.0px;height:24px;line-height:24px;font-size:15px;color:#ffffff;letter-spacing:0.159px;width:24px;text-align:center;">1</div>
<div class="a" style="left:202px;top:568px;width:121px;height:39px;background:#3a3a3a;border-radius:6px 6px 0 0"></div>
<div class="t" style="left:223px;top:576.0px;height:24px;line-height:24px;font-size:16px;color:#cfcfcf;letter-spacing:0.45px;">Ордера</div>
<div class="a" style="left:288px;top:578px;width:24px;height:20px;background:#5e5e5e;border-radius:4px"></div>
<div class="t" style="left:288.0px;top:577.0px;height:24px;line-height:24px;font-size:15px;color:#ffffff;letter-spacing:0.159px;width:24px;text-align:center;">0</div>
<div class="a" style="left:330px;top:568px;width:95px;height:40px;background:#555555;border-radius:6px 6px 0 0;border:1px solid #626262;border-bottom:none"></div>
<div class="t" style="left:351px;top:576.0px;height:24px;line-height:24px;font-size:16px;color:#f0f0f0;letter-spacing:0.45px;">История</div>
<div class="a" style="left:433px;top:568px;width:217px;height:39px;background:#3a3a3a;border-radius:6px 6px 0 0"></div>
<div class="t" style="left:454px;top:576.0px;height:24px;line-height:24px;font-size:16px;color:#cfcfcf;letter-spacing:0.397px;">Оповещения о цене</div>
<div class="a" style="left:615px;top:578px;width:24px;height:20px;background:#5e5e5e;border-radius:4px"></div>
<div class="t" style="left:615.0px;top:577.0px;height:24px;line-height:24px;font-size:15px;color:#ffffff;letter-spacing:0.159px;width:24px;text-align:center;">0</div>
<div class="a" style="left:657px;top:568px;width:117px;height:39px;background:#3a3a3a;border-radius:6px 6px 0 0"></div>
<div class="t" style="left:678px;top:576.0px;height:24px;line-height:24px;font-size:16px;color:#cfcfcf;letter-spacing:0.45px;">Транзакции</div>
<div class="a" style="left:782px;top:568px;width:91px;height:39px;background:#3a3a3a;border-radius:6px 6px 0 0"></div>
<div class="t" style="left:803px;top:576.0px;height:24px;line-height:24px;font-size:16px;color:#cfcfcf;letter-spacing:0.45px;">Журнал</div>
<div class="a" style="left:880px;top:568px;width:75px;height:39px;background:#3a3a3a;border-radius:6px 6px 0 0"></div>
<div class="t" style="left:908px;top:576.0px;height:24px;line-height:24px;font-size:16px;color:#cfcfcf;letter-spacing:0.0px;">Algo</div>
<svg style="left:0;top:0" width="1000" height="610"><rect x="75.5" y="578.00" width="1.3" height="1.3" fill="#7a7a7a"/><rect x="75.5" y="580.75" width="1.3" height="1.3" fill="#7a7a7a"/><rect x="75.5" y="583.50" width="1.3" height="1.3" fill="#7a7a7a"/><rect x="75.5" y="586.25" width="1.3" height="1.3" fill="#7a7a7a"/><rect x="75.5" y="589.00" width="1.3" height="1.3" fill="#7a7a7a"/><rect x="75.5" y="591.75" width="1.3" height="1.3" fill="#7a7a7a"/><rect x="75.5" y="594.50" width="1.3" height="1.3" fill="#7a7a7a"/><rect x="78.1" y="578.00" width="1.3" height="1.3" fill="#7a7a7a"/><rect x="78.1" y="580.75" width="1.3" height="1.3" fill="#7a7a7a"/><rect x="78.1" y="583.50" width="1.3" height="1.3" fill="#7a7a7a"/><rect x="78.1" y="586.25" width="1.3" height="1.3" fill="#7a7a7a"/><rect x="78.1" y="589.00" width="1.3" height="1.3" fill="#7a7a7a"/><rect x="78.1" y="591.75" width="1.3" height="1.3" fill="#7a7a7a"/><rect x="78.1" y="594.50" width="1.3" height="1.3" fill="#7a7a7a"/><rect x="80.7" y="578.00" width="1.3" height="1.3" fill="#7a7a7a"/><rect x="80.7" y="580.75" width="1.3" height="1.3" fill="#7a7a7a"/><rect x="80.7" y="583.50" width="1.3" height="1.3" fill="#7a7a7a"/><rect x="80.7" y="586.25" width="1.3" height="1.3" fill="#7a7a7a"/><rect x="80.7" y="589.00" width="1.3" height="1.3" fill="#7a7a7a"/><rect x="80.7" y="591.75" width="1.3" height="1.3" fill="#7a7a7a"/><rect x="80.7" y="594.50" width="1.3" height="1.3" fill="#7a7a7a"/><rect x="211.5" y="578.00" width="1.3" height="1.3" fill="#7a7a7a"/><rect x="211.5" y="580.75" width="1.3" height="1.3" fill="#7a7a7a"/><rect x="211.5" y="583.50" width="1.3" height="1.3" fill="#7a7a7a"/><rect x="211.5" y="586.25" width="1.3" height="1.3" fill="#7a7a7a"/><rect x="211.5" y="589.00" width="1.3" height="1.3" fill="#7a7a7a"/><rect x="211.5" y="591.75" width="1.3" height="1.3" fill="#7a7a7a"/><rect x="211.5" y="594.50" width="1.3" height="1.3" fill="#7a7a7a"/><rect x="214.1" y="578.00" width="1.3" height="1.3" fill="#7a7a7a"/><rect x="214.1" y="580.75" width="1.3" height="1.3" fill="#7a7a7a"/><rect x="214.1" y="583.50" width="1.3" height="1.3" fill="#7a7a7a"/><rect x="214.1" y="586.25" width="1.3" height="1.3" fill="#7a7a7a"/><rect x="214.1" y="589.00" width="1.3" height="1.3" fill="#7a7a7a"/><rect x="214.1" y="591.75" width="1.3" height="1.3" fill="#7a7a7a"/><rect x="214.1" y="594.50" width="1.3" height="1.3" fill="#7a7a7a"/><rect x="216.7" y="578.00" width="1.3" height="1.3" fill="#7a7a7a"/><rect x="216.7" y="580.75" width="1.3" height="1.3" fill="#7a7a7a"/><rect x="216.7" y="583.50" width="1.3" height="1.3" fill="#7a7a7a"/><rect x="216.7" y="586.25" width="1.3" height="1.3" fill="#7a7a7a"/><rect x="216.7" y="589.00" width="1.3" height="1.3" fill="#7a7a7a"/><rect x="216.7" y="591.75" width="1.3" height="1.3" fill="#7a7a7a"/><rect x="216.7" y="594.50" width="1.3" height="1.3" fill="#7a7a7a"/><rect x="339.5" y="578.00" width="1.3" height="1.3" fill="#7a7a7a"/><rect x="339.5" y="580.75" width="1.3" height="1.3" fill="#7a7a7a"/><rect x="339.5" y="583.50" width="1.3" height="1.3" fill="#7a7a7a"/><rect x="339.5" y="586.25" width="1.3" height="1.3" fill="#7a7a7a"/><rect x="339.5" y="589.00" width="1.3" height="1.3" fill="#7a7a7a"/><rect x="339.5" y="591.75" width="1.3" height="1.3" fill="#7a7a7a"/><rect x="339.5" y="594.50" width="1.3" height="1.3" fill="#7a7a7a"/><rect x="342.1" y="578.00" width="1.3" height="1.3" fill="#7a7a7a"/><rect x="342.1" y="580.75" width="1.3" height="1.3" fill="#7a7a7a"/><rect x="342.1" y="583.50" width="1.3" height="1.3" fill="#7a7a7a"/><rect x="342.1" y="586.25" width="1.3" height="1.3" fill="#7a7a7a"/><rect x="342.1" y="589.00" width="1.3" height="1.3" fill="#7a7a7a"/><rect x="342.1" y="591.75" width="1.3" height="1.3" fill="#7a7a7a"/><rect x="342.1" y="594.50" width="1.3" height="1.3" fill="#7a7a7a"/><rect x="344.7" y="578.00" width="1.3" height="1.3" fill="#7a7a7a"/><rect x="344.7" y="580.75" width="1.3" height="1.3" fill="#7a7a7a"/><rect x="344.7" y="583.50" width="1.3" height="1.3" fill="#7a7a7a"/><rect x="344.7" y="586.25" width="1.3" height="1.3" fill="#7a7a7a"/><rect x="344.7" y="589.00" width="1.3" height="1.3" fill="#7a7a7a"/><rect x="344.7" y="591.75" width="1.3" height="1.3" fill="#7a7a7a"/><rect x="344.7" y="594.50" width="1.3" height="1.3" fill="#7a7a7a"/><rect x="442.5" y="578.00" width="1.3" height="1.3" fill="#7a7a7a"/><rect x="442.5" y="580.75" width="1.3" height="1.3" fill="#7a7a7a"/><rect x="442.5" y="583.50" width="1.3" height="1.3" fill="#7a7a7a"/><rect x="442.5" y="586.25" width="1.3" height="1.3" fill="#7a7a7a"/><rect x="442.5" y="589.00" width="1.3" height="1.3" fill="#7a7a7a"/><rect x="442.5" y="591.75" width="1.3" height="1.3" fill="#7a7a7a"/><rect x="442.5" y="594.50" width="1.3" height="1.3" fill="#7a7a7a"/><rect x="445.1" y="578.00" width="1.3" height="1.3" fill="#7a7a7a"/><rect x="445.1" y="580.75" width="1.3" height="1.3" fill="#7a7a7a"/><rect x="445.1" y="583.50" width="1.3" height="1.3" fill="#7a7a7a"/><rect x="445.1" y="586.25" width="1.3" height="1.3" fill="#7a7a7a"/><rect x="445.1" y="589.00" width="1.3" height="1.3" fill="#7a7a7a"/><rect x="445.1" y="591.75" width="1.3" height="1.3" fill="#7a7a7a"/><rect x="445.1" y="594.50" width="1.3" height="1.3" fill="#7a7a7a"/><rect x="447.7" y="578.00" width="1.3" height="1.3" fill="#7a7a7a"/><rect x="447.7" y="580.75" width="1.3" height="1.3" fill="#7a7a7a"/><rect x="447.7" y="583.50" width="1.3" height="1.3" fill="#7a7a7a"/><rect x="447.7" y="586.25" width="1.3" height="1.3" fill="#7a7a7a"/><rect x="447.7" y="589.00" width="1.3" height="1.3" fill="#7a7a7a"/><rect x="447.7" y="591.75" width="1.3" height="1.3" fill="#7a7a7a"/><rect x="447.7" y="594.50" width="1.3" height="1.3" fill="#7a7a7a"/><rect x="666.5" y="578.00" width="1.3" height="1.3" fill="#7a7a7a"/><rect x="666.5" y="580.75" width="1.3" height="1.3" fill="#7a7a7a"/><rect x="666.5" y="583.50" width="1.3" height="1.3" fill="#7a7a7a"/><rect x="666.5" y="586.25" width="1.3" height="1.3" fill="#7a7a7a"/><rect x="666.5" y="589.00" width="1.3" height="1.3" fill="#7a7a7a"/><rect x="666.5" y="591.75" width="1.3" height="1.3" fill="#7a7a7a"/><rect x="666.5" y="594.50" width="1.3" height="1.3" fill="#7a7a7a"/><rect x="669.1" y="578.00" width="1.3" height="1.3" fill="#7a7a7a"/><rect x="669.1" y="580.75" width="1.3" height="1.3" fill="#7a7a7a"/><rect x="669.1" y="583.50" width="1.3" height="1.3" fill="#7a7a7a"/><rect x="669.1" y="586.25" width="1.3" height="1.3" fill="#7a7a7a"/><rect x="669.1" y="589.00" width="1.3" height="1.3" fill="#7a7a7a"/><rect x="669.1" y="591.75" width="1.3" height="1.3" fill="#7a7a7a"/><rect x="669.1" y="594.50" width="1.3" height="1.3" fill="#7a7a7a"/><rect x="671.7" y="578.00" width="1.3" height="1.3" fill="#7a7a7a"/><rect x="671.7" y="580.75" width="1.3" height="1.3" fill="#7a7a7a"/><rect x="671.7" y="583.50" width="1.3" height="1.3" fill="#7a7a7a"/><rect x="671.7" y="586.25" width="1.3" height="1.3" fill="#7a7a7a"/><rect x="671.7" y="589.00" width="1.3" height="1.3" fill="#7a7a7a"/><rect x="671.7" y="591.75" width="1.3" height="1.3" fill="#7a7a7a"/><rect x="671.7" y="594.50" width="1.3" height="1.3" fill="#7a7a7a"/><rect x="791.5" y="578.00" width="1.3" height="1.3" fill="#7a7a7a"/><rect x="791.5" y="580.75" width="1.3" height="1.3" fill="#7a7a7a"/><rect x="791.5" y="583.50" width="1.3" height="1.3" fill="#7a7a7a"/><rect x="791.5" y="586.25" width="1.3" height="1.3" fill="#7a7a7a"/><rect x="791.5" y="589.00" width="1.3" height="1.3" fill="#7a7a7a"/><rect x="791.5" y="591.75" width="1.3" height="1.3" fill="#7a7a7a"/><rect x="791.5" y="594.50" width="1.3" height="1.3" fill="#7a7a7a"/><rect x="794.1" y="578.00" width="1.3" height="1.3" fill="#7a7a7a"/><rect x="794.1" y="580.75" width="1.3" height="1.3" fill="#7a7a7a"/><rect x="794.1" y="583.50" width="1.3" height="1.3" fill="#7a7a7a"/><rect x="794.1" y="586.25" width="1.3" height="1.3" fill="#7a7a7a"/><rect x="794.1" y="589.00" width="1.3" height="1.3" fill="#7a7a7a"/><rect x="794.1" y="591.75" width="1.3" height="1.3" fill="#7a7a7a"/><rect x="794.1" y="594.50" width="1.3" height="1.3" fill="#7a7a7a"/><rect x="796.7" y="578.00" width="1.3" height="1.3" fill="#7a7a7a"/><rect x="796.7" y="580.75" width="1.3" height="1.3" fill="#7a7a7a"/><rect x="796.7" y="583.50" width="1.3" height="1.3" fill="#7a7a7a"/><rect x="796.7" y="586.25" width="1.3" height="1.3" fill="#7a7a7a"/><rect x="796.7" y="589.00" width="1.3" height="1.3" fill="#7a7a7a"/><rect x="796.7" y="591.75" width="1.3" height="1.3" fill="#7a7a7a"/><rect x="796.7" y="594.50" width="1.3" height="1.3" fill="#7a7a7a"/><rect x="896.5" y="578.00" width="1.3" height="1.3" fill="#7a7a7a"/><rect x="896.5" y="580.75" width="1.3" height="1.3" fill="#7a7a7a"/><rect x="896.5" y="583.50" width="1.3" height="1.3" fill="#7a7a7a"/><rect x="896.5" y="586.25" width="1.3" height="1.3" fill="#7a7a7a"/><rect x="896.5" y="589.00" width="1.3" height="1.3" fill="#7a7a7a"/><rect x="896.5" y="591.75" width="1.3" height="1.3" fill="#7a7a7a"/><rect x="896.5" y="594.50" width="1.3" height="1.3" fill="#7a7a7a"/><rect x="899.1" y="578.00" width="1.3" height="1.3" fill="#7a7a7a"/><rect x="899.1" y="580.75" width="1.3" height="1.3" fill="#7a7a7a"/><rect x="899.1" y="583.50" width="1.3" height="1.3" fill="#7a7a7a"/><rect x="899.1" y="586.25" width="1.3" height="1.3" fill="#7a7a7a"/><rect x="899.1" y="589.00" width="1.3" height="1.3" fill="#7a7a7a"/><rect x="899.1" y="591.75" width="1.3" height="1.3" fill="#7a7a7a"/><rect x="899.1" y="594.50" width="1.3" height="1.3" fill="#7a7a7a"/><rect x="901.7" y="578.00" width="1.3" height="1.3" fill="#7a7a7a"/><rect x="901.7" y="580.75" width="1.3" height="1.3" fill="#7a7a7a"/><rect x="901.7" y="583.50" width="1.3" height="1.3" fill="#7a7a7a"/><rect x="901.7" y="586.25" width="1.3" height="1.3" fill="#7a7a7a"/><rect x="901.7" y="589.00" width="1.3" height="1.3" fill="#7a7a7a"/><rect x="901.7" y="591.75" width="1.3" height="1.3" fill="#7a7a7a"/><rect x="901.7" y="594.50" width="1.3" height="1.3" fill="#7a7a7a"/></svg>
<div class="a" style="left:1811px;top:568px;width:101px;height:31px;background:#3a3a3a;border-radius:6px"></div>
<div class="t" style="left:1819px;top:573.0px;height:24px;line-height:24px;font-size:16px;color:#d8d8d8;letter-spacing:0.45px;">Отзывы</div>
<svg style="left:0;top:0" width="1920" height="600"><path d="M1889 575.8h14.5a2 2 0 0 1 2 2v5.5a2 2 0 0 1-2 2h-9.5l-6.5 6.5v-6.5h-.5a2 2 0 0 1-2-2v-5.5a2 2 0 0 1 2-2z" stroke="#fff" stroke-width="1.9" fill="#2e2e2e" stroke-linejoin="round"/><rect x="1889" y="578" width="6" height="5" fill="#008000"/><rect x="1896" y="578" width="7" height="5" fill="#ff0000"/></svg>
<svg style="left:1910px;top:548px" width="10" height="50"><rect x="3" y="3" width="1.5" height="7" fill="#888"/><rect x="6" y="3" width="1.5" height="7" fill="#888"/><path d="M3 21.5l5.5-4.5v9z" fill="#888"/><rect x="3" y="32" width="1.5" height="7" fill="#888"/><rect x="6" y="32" width="1.5" height="7" fill="#888"/></svg>
<div class="a" style="left:66px;top:607px;width:1846px;height:439px;background:#555555;border-radius:0 6px 6px 6px;border-top:1px solid #626262"></div>
<div class="a" style="left:331px;top:606px;width:93px;height:3px;background:#555555;"></div>
<div class="a" style="left:75px;top:616px;width:270px;height:28px;background:#2a2a2a;border-radius:5px"></div>
<svg style="left:320px;top:620px" width="22" height="20" viewBox="0 0 22 20"><circle cx="13.5" cy="8" r="5.5" stroke="#d0d0d0" stroke-width="2" fill="none"/><path d="M9.5 12l-5.5 5.5" stroke="#d0d0d0" stroke-width="2.6"/></svg>
<div class="a" style="left:352px;top:616px;width:172px;height:28px;background:#2a2a2a;border-radius:5px"></div>
<div class="t" style="left:361px;top:619.0px;height:24px;line-height:24px;font-size:16px;color:#ececec;letter-spacing:0.338px;">Все направлен...</div>
<svg style="left:508px;top:626px" width="9" height="8"><path d="M0 0h9L4.5 8z" fill="#aaa"/></svg>
<div class="t" style="left:532px;top:619.0px;height:24px;line-height:24px;font-size:16px;color:#ececec;letter-spacing:0.386px;">Период:</div>
<div class="a" style="left:602px;top:622px;width:16px;height:16px;border-radius:50%;background:#2a2a2a"></div>
<div class="a" style="left:626px;top:616px;width:150px;height:28px;background:#4a4a4a;border-radius:5px"></div>
<div class="t" style="left:635px;top:619.0px;height:24px;line-height:24px;font-size:16px;color:#8e8e8e;letter-spacing:0.415px;">Текущий месяц</div>
<svg style="left:760px;top:626px" width="9" height="8"><path d="M0 0h9L4.5 8z" fill="#8a8a8a"/></svg>
<div class="a" style="left:791px;top:622px;width:16px;height:16px;border-radius:50%;background:#2a2a2a"></div>
<div class="a" style="left:796px;top:627px;width:6px;height:6px;border-radius:50%;background:#e0e0e0"></div>
<div class="a" style="left:809px;top:610px;width:307px;height:43px;background:transparent;border:4px solid #ff0000;border-radius:3px"></div>
<div class="a" style="left:815px;top:616px;width:132px;height:28px;background:#2a2a2a;border-radius:5px"></div>
<div class="t" style="left:822px;top:619.0px;height:24px;line-height:24px;font-size:16px;color:#f2f2f2;letter-spacing:0.136px;">01/12/2025</div>
<svg style="left:930px;top:625px" width="9" height="8"><path d="M0 0h9L4.5 8z" fill="#aaa"/></svg>
<div class="a" style="left:957px;top:629px;width:13px;height:2px;background:#d8d8d8;"></div>
<div class="a" style="left:977px;top:616px;width:132px;height:28px;background:#2a2a2a;border-radius:5px"></div>
<div class="t" style="left:984px;top:619.0px;height:24px;line-height:24px;font-size:16px;color:#f2f2f2;letter-spacing:0.136px;">01/01/2026</div>
<svg style="left:1092px;top:625px" width="9" height="8"><path d="M0 0h9L4.5 8z" fill="#aaa"/></svg>
<div class="a" style="left:1624px;top:616px;width:148px;height:28px;background:#039444;border-radius:5px"></div>
<div class="t" style="left:1624.0px;top:619.0px;height:24px;line-height:24px;font-size:16px;color:#ffffff;letter-spacing:0.42px;width:148px;text-align:center;">История ордеров</div>
<div class="a" style="left:1781px;top:616px;width:123px;height:28px;background:#039444;border-radius:5px"></div>
<div class="t" style="left:1779.0px;top:619.0px;height:24px;line-height:24px;font-size:16px;color:#ffffff;letter-spacing:0.45px;width:100px;text-align:center;">Выписка</div>
<div class="a" style="left:1877px;top:621px;width:1px;height:19px;background:#2aa860;"></div>
<svg style="left:1887px;top:626px" width="11" height="9"><path d="M0 0h11L5.5 9z" fill="#fff"/></svg>
<div class="a" style="left:75px;top:652px;width:1829px;height:348px;background:#2a2a2a;border-radius:6px"></div>
<div class="a" style="left:284px;top:658px;width:1px;height:24px;background:#4a4a4a;"></div>
<div class="a" style="left:447px;top:658px;width:1px;height:24px;background:#4a4a4a;"></div>
<div class="a" style="left:797px;top:658px;width:1px;height:24px;background:#4a4a4a;"></div>
<div class="a" style="left:1030px;top:658px;width:1px;height:24px;background:#4a4a4a;"></div>
<div class="a" style="left:1263px;top:658px;width:1px;height:24px;background:#4a4a4a;"></div>
<div class="a" style="left:1497px;top:658px;width:1px;height:24px;background:#4a4a4a;"></div>
<div class="a" style="left:1636px;top:658px;width:1px;height:24px;background:#4a4a4a;"></div>
<div class="a" style="left:1869px;top:658px;width:1px;height:24px;background:#4a4a4a;"></div>
<div class="t" style="left:5.0px;top:659.0px;height:24px;line-height:24px;font-size:16px;color:#d2d2d2;letter-spacing:0.45px;width:400px;text-align:center;">Инструмент</div>
<div class="t" style="left:289px;top:659.0px;height:24px;line-height:24px;font-size:16px;color:#d2d2d2;letter-spacing:0.371px;">Открывающее нап..</div>
<div class="t" style="left:425.0px;top:659.0px;height:24px;line-height:24px;font-size:16px;color:#d2d2d2;letter-spacing:0.418px;width:400px;text-align:center;">Время закрытия</div>
<div class="t" style="left:717.0px;top:659.0px;height:24px;line-height:24px;font-size:16px;color:#d2d2d2;letter-spacing:0.405px;width:400px;text-align:center;">Цена входа</div>
<div class="t" style="left:950.0px;top:659.0px;height:24px;line-height:24px;font-size:16px;color:#d2d2d2;letter-spacing:0.415px;width:400px;text-align:center;">Цена закрытия</div>
<div class="t" style="left:1183.5px;top:659.0px;height:24px;line-height:24px;font-size:16px;color:#d2d2d2;letter-spacing:0.366px;width:400px;text-align:center;">Чистая прибыль $</div>
<div class="t" style="left:1370.5px;top:659.0px;height:24px;line-height:24px;font-size:16px;color:#d2d2d2;letter-spacing:0.45px;width:400px;text-align:center;">Пипы</div>
<div class="t" style="left:1703px;top:659.0px;height:24px;line-height:24px;font-size:16px;color:#d2d2d2;letter-spacing:0.338px;">Баланс $</div>
<div class="a" style="left:1781px;top:660px;width:16px;height:20px;background:transparent;border:1.5px solid #c8c8c8;border-radius:3px"></div>
<div class="t" style="left:1781.0px;top:659.0px;height:24px;line-height:24px;font-size:12.5px;color:#e0e0e0;letter-spacing:0.133px;width:16px;text-align:center;">1</div>
<svg style="left:0;top:650px" width="1920" height="400"><path d="M1801 21l4.7-7 4.7 7z" fill="#d0d0d0"/><path d="M1885 19l5.5-8.5 5.5 8.5z" fill="#9a9a9a"/><rect x="1886" y="192" width="10" height="92" rx="5" fill="#8a8a8a"/><path d="M1885 292h11l-5.5 9z" fill="#9a9a9a"/></svg>
<div class="a" style="left:82px;top:688px;width:28px;height:28px;background:#4a4a4a;border-radius:5px"></div>
<div class="a" style="left:124px;top:717px;width:1749px;height:2px;background:#464646;"></div>
<div class="t" style="left:5.0px;top:691.0px;height:24px;line-height:24px;font-size:16px;color:#f4f4f4;letter-spacing:0.034px;width:400px;text-align:center;">#USOil_F26</div>
<div class="t" style="left:167.0px;top:691.0px;height:24px;line-height:24px;font-size:16px;color:#f4f4f4;letter-spacing:0.45px;width:400px;text-align:center;">Купить</div>
<div class="t" style="left:425.5px;top:691.0px;height:24px;line-height:24px;font-size:16px;color:#f4f4f4;letter-spacing:0.126px;width:400px;text-align:center;">17/12/2025 23:54:38.276</div>
<div class="t" style="left:717.0px;top:691.0px;height:24px;line-height:24px;font-size:16px;color:#f4f4f4;letter-spacing:0.142px;width:400px;text-align:center;">56.379</div>
<div class="t" style="left:950.0px;top:691.0px;height:24px;line-height:24px;font-size:16px;color:#f4f4f4;letter-spacing:0.142px;width:400px;text-align:center;">56.694</div>
<div class="t" style="left:1183.5px;top:691.0px;height:24px;line-height:24px;font-size:16px;color:#3cbf3c;letter-spacing:0.136px;width:400px;text-align:center;">31.50</div>
<div class="t" style="left:1370.0px;top:691.0px;height:24px;line-height:24px;font-size:16px;color:#3cbf3c;letter-spacing:0.128px;width:400px;text-align:center;">31.5</div>
<div class="t" style="left:1557.0px;top:691.0px;height:24px;line-height:24px;font-size:16px;color:#f4f4f4;letter-spacing:0.128px;width:400px;text-align:center;">9 619.95</div>
<div class="a" style="left:82px;top:722px;width:28px;height:28px;background:#4a4a4a;border-radius:5px"></div>
<div class="a" style="left:124px;top:751px;width:1749px;height:2px;background:#464646;"></div>
<div class="t" style="left:5.0px;top:725.0px;height:24px;line-height:24px;font-size:16px;color:#f4f4f4;letter-spacing:0.034px;width:400px;text-align:center;">#USOil_F26</div>
<div class="t" style="left:167.0px;top:725.0px;height:24px;line-height:24px;font-size:16px;color:#f4f4f4;letter-spacing:0.45px;width:400px;text-align:center;">Купить</div>
<div class="t" style="left:425.5px;top:725.0px;height:24px;line-height:24px;font-size:16px;color:#f4f4f4;letter-spacing:0.126px;width:400px;text-align:center;">17/12/2025 23:54:39.571</div>
<div class="t" style="left:717.0px;top:725.0px;height:24px;line-height:24px;font-size:16px;color:#f4f4f4;letter-spacing:0.142px;width:400px;text-align:center;">56.539</div>
<div class="t" style="left:950.0px;top:725.0px;height:24px;line-height:24px;font-size:16px;color:#f4f4f4;letter-spacing:0.142px;width:400px;text-align:center;">56.694</div>
<div class="t" style="left:1183.5px;top:725.0px;height:24px;line-height:24px;font-size:16px;color:#3cbf3c;letter-spacing:0.136px;width:400px;text-align:center;">15.50</div>
<div class="t" style="left:1370.0px;top:725.0px;height:24px;line-height:24px;font-size:16px;color:#3cbf3c;letter-spacing:0.128px;width:400px;text-align:center;">15.5</div>
<div class="t" style="left:1557.0px;top:725.0px;height:24px;line-height:24px;font-size:16px;color:#f4f4f4;letter-spacing:0.128px;width:400px;text-align:center;">9 635.45</div>
<div class="a" style="left:82px;top:756px;width:28px;height:28px;background:#4a4a4a;border-radius:5px"></div>
<div class="a" style="left:124px;top:785px;width:1749px;height:2px;background:#464646;"></div>
<div class="t" style="left:5.0px;top:759.0px;height:24px;line-height:24px;font-size:16px;color:#f4f4f4;letter-spacing:0.034px;width:400px;text-align:center;">#USOil_G26</div>
<div class="t" style="left:167.0px;top:759.0px;height:24px;line-height:24px;font-size:16px;color:#f4f4f4;letter-spacing:0.45px;width:400px;text-align:center;">Купить</div>
<div class="t" style="left:425.5px;top:759.0px;height:24px;line-height:24px;font-size:16px;color:#f4f4f4;letter-spacing:0.126px;width:400px;text-align:center;">19/12/2025 21:25:27.175</div>
<div class="t" style="left:717.0px;top:759.0px;height:24px;line-height:24px;font-size:16px;color:#f4f4f4;letter-spacing:0.142px;width:400px;text-align:center;">56.139</div>
<div class="t" style="left:950.0px;top:759.0px;height:24px;line-height:24px;font-size:16px;color:#f4f4f4;letter-spacing:0.142px;width:400px;text-align:center;">56.559</div>
<div class="t" style="left:1183.5px;top:759.0px;height:24px;line-height:24px;font-size:16px;color:#3cbf3c;letter-spacing:0.136px;width:400px;text-align:center;">42.00</div>
<div class="t" style="left:1370.0px;top:759.0px;height:24px;line-height:24px;font-size:16px;color:#3cbf3c;letter-spacing:0.128px;width:400px;text-align:center;">42.0</div>
<div class="t" style="left:1557.0px;top:759.0px;height:24px;line-height:24px;font-size:16px;color:#f4f4f4;letter-spacing:0.128px;width:400px;text-align:center;">9 660.45</div>
<div class="a" style="left:82px;top:790px;width:28px;height:28px;background:#4a4a4a;border-radius:5px"></div>
<div class="a" style="left:124px;top:819px;width:1749px;height:2px;background:#464646;"></div>
<div class="t" style="left:5.0px;top:793.0px;height:24px;line-height:24px;font-size:16px;color:#f4f4f4;letter-spacing:0.034px;width:400px;text-align:center;">#USOil_G26</div>
<div class="t" style="left:167.0px;top:793.0px;height:24px;line-height:24px;font-size:16px;color:#f4f4f4;letter-spacing:0.45px;width:400px;text-align:center;">Купить</div>
<div class="t" style="left:425.5px;top:793.0px;height:24px;line-height:24px;font-size:16px;color:#f4f4f4;letter-spacing:0.126px;width:400px;text-align:center;">29/12/2025 16:59:08.319</div>
<div class="t" style="left:717.0px;top:793.0px;height:24px;line-height:24px;font-size:16px;color:#f4f4f4;letter-spacing:0.142px;width:400px;text-align:center;">56.589</div>
<div class="t" style="left:950.0px;top:793.0px;height:24px;line-height:24px;font-size:16px;color:#f4f4f4;letter-spacing:0.142px;width:400px;text-align:center;">58.099</div>
<div class="t" style="left:1183.5px;top:793.0px;height:24px;line-height:24px;font-size:16px;color:#3cbf3c;letter-spacing:0.142px;width:400px;text-align:center;">151.00</div>
<div class="t" style="left:1370.0px;top:793.0px;height:24px;line-height:24px;font-size:16px;color:#3cbf3c;letter-spacing:0.136px;width:400px;text-align:center;">151.0</div>
<div class="t" style="left:1557.0px;top:793.0px;height:24px;line-height:24px;font-size:16px;color:#f4f4f4;letter-spacing:0.128px;width:400px;text-align:center;">9 811.45</div>
<div class="a" style="left:82px;top:824px;width:28px;height:28px;background:#4a4a4a;border-radius:5px"></div>
<div class="a" style="left:124px;top:853px;width:1749px;height:2px;background:#464646;"></div>
<div class="t" style="left:5.0px;top:827.0px;height:24px;line-height:24px;font-size:16px;color:#f4f4f4;letter-spacing:0.034px;width:400px;text-align:center;">#USOil_G26</div>
<div class="t" style="left:167.0px;top:827.0px;height:24px;line-height:24px;font-size:16px;color:#f4f4f4;letter-spacing:0.45px;width:400px;text-align:center;">Купить</div>
<div class="t" style="left:425.5px;top:827.0px;height:24px;line-height:24px;font-size:16px;color:#f4f4f4;letter-spacing:0.126px;width:400px;text-align:center;">29/12/2025 16:59:09.252</div>
<div class="t" style="left:717.0px;top:827.0px;height:24px;line-height:24px;font-size:16px;color:#f4f4f4;letter-spacing:0.142px;width:400px;text-align:center;">56.589</div>
<div class="t" style="left:950.0px;top:827.0px;height:24px;line-height:24px;font-size:16px;color:#f4f4f4;letter-spacing:0.142px;width:400px;text-align:center;">58.099</div>
<div class="t" style="left:1183.5px;top:827.0px;height:24px;line-height:24px;font-size:16px;color:#3cbf3c;letter-spacing:0.142px;width:400px;text-align:center;">151.00</div>
<div class="t" style="left:1370.0px;top:827.0px;height:24px;line-height:24px;font-size:16px;color:#3cbf3c;letter-spacing:0.136px;width:400px;text-align:center;">151.0</div>
<div class="t" style="left:1557.0px;top:827.0px;height:24px;line-height:24px;font-size:16px;color:#f4f4f4;letter-spacing:0.128px;width:400px;text-align:center;">9 962.45</div>
<div class="a" style="left:82px;top:858px;width:28px;height:28px;background:#4a4a4a;border-radius:5px"></div>
<div class="a" style="left:124px;top:887px;width:1749px;height:2px;background:#464646;"></div>
<div class="t" style="left:5.0px;top:861.0px;height:24px;line-height:24px;font-size:16px;color:#f4f4f4;letter-spacing:0.034px;width:400px;text-align:center;">#USOil_G26</div>
<div class="t" style="left:167.0px;top:861.0px;height:24px;line-height:24px;font-size:16px;color:#f4f4f4;letter-spacing:0.45px;width:400px;text-align:center;">Купить</div>
<div class="t" style="left:425.5px;top:861.0px;height:24px;line-height:24px;font-size:16px;color:#f4f4f4;letter-spacing:0.126px;width:400px;text-align:center;">29/12/2025 16:59:10.329</div>
<div class="t" style="left:717.0px;top:861.0px;height:24px;line-height:24px;font-size:16px;color:#f4f4f4;letter-spacing:0.142px;width:400px;text-align:center;">56.579</div>
<div class="t" style="left:950.0px;top:861.0px;height:24px;line-height:24px;font-size:16px;color:#f4f4f4;letter-spacing:0.142px;width:400px;text-align:center;">58.099</div>
<div class="t" style="left:1183.5px;top:861.0px;height:24px;line-height:24px;font-size:16px;color:#3cbf3c;letter-spacing:0.142px;width:400px;text-align:center;">152.00</div>
<div class="t" style="left:1370.0px;top:861.0px;height:24px;line-height:24px;font-size:16px;color:#3cbf3c;letter-spacing:0.136px;width:400px;text-align:center;">152.0</div>
<div class="t" style="left:1557.0px;top:861.0px;height:24px;line-height:24px;font-size:16px;color:#f4f4f4;letter-spacing:0.132px;width:400px;text-align:center;">10 114.45</div>
<div class="a" style="left:82px;top:892px;width:28px;height:28px;background:#4a4a4a;border-radius:5px"></div>
<div class="a" style="left:124px;top:921px;width:1749px;height:2px;background:#464646;"></div>
<div class="t" style="left:5.0px;top:895.0px;height:24px;line-height:24px;font-size:16px;color:#f4f4f4;letter-spacing:0.034px;width:400px;text-align:center;">#USOil_G26</div>
<div class="t" style="left:167.0px;top:895.0px;height:24px;line-height:24px;font-size:16px;color:#f4f4f4;letter-spacing:0.45px;width:400px;text-align:center;">Купить</div>
<div class="t" style="left:425.5px;top:895.0px;height:24px;line-height:24px;font-size:16px;color:#f4f4f4;letter-spacing:0.126px;width:400px;text-align:center;">29/12/2025 16:59:11.882</div>
<div class="t" style="left:717.0px;top:895.0px;height:24px;line-height:24px;font-size:16px;color:#f4f4f4;letter-spacing:0.142px;width:400px;text-align:center;">56.579</div>
<div class="t" style="left:950.0px;top:895.0px;height:24px;line-height:24px;font-size:16px;color:#f4f4f4;letter-spacing:0.142px;width:400px;text-align:center;">58.099</div>
<div class="t" style="left:1183.5px;top:895.0px;height:24px;line-height:24px;font-size:16px;color:#3cbf3c;letter-spacing:0.142px;width:400px;text-align:center;">152.00</div>
<div class="t" style="left:1370.0px;top:895.0px;height:24px;line-height:24px;font-size:16px;color:#3cbf3c;letter-spacing:0.136px;width:400px;text-align:center;">152.0</div>
<div class="t" style="left:1557.0px;top:895.0px;height:24px;line-height:24px;font-size:16px;color:#f4f4f4;letter-spacing:0.132px;width:400px;text-align:center;">10 266.45</div>
<div class="a" style="left:82px;top:926px;width:28px;height:28px;background:#4a4a4a;border-radius:5px"></div>
<div class="t" style="left:5.0px;top:929.0px;height:24px;line-height:24px;font-size:16px;color:#f4f4f4;letter-spacing:0.034px;width:400px;text-align:center;">#USOil_G26</div>
<div class="t" style="left:167.0px;top:929.0px;height:24px;line-height:24px;font-size:16px;color:#f4f4f4;letter-spacing:0.45px;width:400px;text-align:center;">Купить</div>
<div class="t" style="left:425.5px;top:929.0px;height:24px;line-height:24px;font-size:16px;color:#f4f4f4;letter-spacing:0.126px;width:400px;text-align:center;">29/12/2025 17:00:43.941</div>
<div class="t" style="left:717.0px;top:929.0px;height:24px;line-height:24px;font-size:16px;color:#f4f4f4;letter-spacing:0.142px;width:400px;text-align:center;">56.574</div>
<div class="t" style="left:950.0px;top:929.0px;height:24px;line-height:24px;font-size:16px;color:#f4f4f4;letter-spacing:0.142px;width:400px;text-align:center;">58.019</div>
<div class="t" style="left:1183.5px;top:929.0px;height:24px;line-height:24px;font-size:16px;color:#3cbf3c;letter-spacing:0.142px;width:400px;text-align:center;">144.50</div>
<div class="t" style="left:1370.0px;top:929.0px;height:24px;line-height:24px;font-size:16px;color:#3cbf3c;letter-spacing:0.136px;width:400px;text-align:center;">144.5</div>
<div class="t" style="left:1557.0px;top:929.0px;height:24px;line-height:24px;font-size:16px;color:#f4f4f4;letter-spacing:0.132px;width:400px;text-align:center;">10 410.95</div>
<svg style="left:0;top:0" width="200" height="1000"><circle cx="98.8" cy="695.5" r="2.1" fill="#e2e2e2"/><path transform="translate(0 0)" d="M94.5 700.9L99.4 700L96.9 708.4Q96.6 709.4 97.4 708.9L99.6 707.1L100 707.7Q97.6 710.6 95.9 710.6Q94.5 710.6 94.9 709.2L97 702.2Q97.2 701.3 96.3 701.4L94.6 701.6Z" fill="#e2e2e2"/><circle cx="98.8" cy="729.5" r="2.1" fill="#e2e2e2"/><path transform="translate(0 34)" d="M94.5 700.9L99.4 700L96.9 708.4Q96.6 709.4 97.4 708.9L99.6 707.1L100 707.7Q97.6 710.6 95.9 710.6Q94.5 710.6 94.9 709.2L97 702.2Q97.2 701.3 96.3 701.4L94.6 701.6Z" fill="#e2e2e2"/><circle cx="98.8" cy="763.5" r="2.1" fill="#e2e2e2"/><path transform="translate(0 68)" d="M94.5 700.9L99.4 700L96.9 708.4Q96.6 709.4 97.4 708.9L99.6 707.1L100 707.7Q97.6 710.6 95.9 710.6Q94.5 710.6 94.9 709.2L97 702.2Q97.2 701.3 96.3 701.4L94.6 701.6Z" fill="#e2e2e2"/><circle cx="98.8" cy="797.5" r="2.1" fill="#e2e2e2"/><path transform="translate(0 102)" d="M94.5 700.9L99.4 700L96.9 708.4Q96.6 709.4 97.4 708.9L99.6 707.1L100 707.7Q97.6 710.6 95.9 710.6Q94.5 710.6 94.9 709.2L97 702.2Q97.2 701.3 96.3 701.4L94.6 701.6Z" fill="#e2e2e2"/><circle cx="98.8" cy="831.5" r="2.1" fill="#e2e2e2"/><path transform="translate(0 136)" d="M94.5 700.9L99.4 700L96.9 708.4Q96.6 709.4 97.4 708.9L99.6 707.1L100 707.7Q97.6 710.6 95.9 710.6Q94.5 710.6 94.9 709.2L97 702.2Q97.2 701.3 96.3 701.4L94.6 701.6Z" fill="#e2e2e2"/><circle cx="98.8" cy="865.5" r="2.1" fill="#e2e2e2"/><path transform="translate(0 170)" d="M94.5 700.9L99.4 700L96.9 708.4Q96.6 709.4 97.4 708.9L99.6 707.1L100 707.7Q97.6 710.6 95.9 710.6Q94.5 710.6 94.9 709.2L97 702.2Q97.2 701.3 96.3 701.4L94.6 701.6Z" fill="#e2e2e2"/><circle cx="98.8" cy="899.5" r="2.1" fill="#e2e2e2"/><path transform="translate(0 204)" d="M94.5 700.9L99.4 700L96.9 708.4Q96.6 709.4 97.4 708.9L99.6 707.1L100 707.7Q97.6 710.6 95.9 710.6Q94.5 710.6 94.9 709.2L97 702.2Q97.2 701.3 96.3 701.4L94.6 701.6Z" fill="#e2e2e2"/><circle cx="98.8" cy="933.5" r="2.1" fill="#e2e2e2"/><path transform="translate(0 238)" d="M94.5 700.9L99.4 700L96.9 708.4Q96.6 709.4 97.4 708.9L99.6 707.1L100 707.7Q97.6 710.6 95.9 710.6Q94.5 710.6 94.9 709.2L97 702.2Q97.2 701.3 96.3 701.4L94.6 701.6Z" fill="#e2e2e2"/></svg>
<div class="a" style="left:527px;top:921px;width:205px;height:42px;background:transparent;border:4px solid #ff0000;border-radius:2px"></div>
<div class="a" style="left:1706px;top:922px;width:107px;height:35px;background:transparent;border:4px solid #ff0000;border-radius:2px"></div>
<div class="a" style="left:1689px;top:958px;width:220px;height:42px;background:transparent;border:4px solid #ff0000;border-radius:2px"></div>
<div class="t" style="left:1702px;top:969.0px;height:24px;line-height:24px;font-size:16px;color:#f4f4f4;letter-spacing:0.413px;">Реализовано:</div>
<div class="t" style="left:1814.5px;top:969.0px;height:24px;line-height:24px;font-size:16px;color:#f4f4f4;letter-spacing:0px;">$</div>
<div class="t" style="left:1832px;top:969.0px;height:24px;line-height:24px;font-size:16px;color:#3cbf3c;letter-spacing:0.128px;">1 743.00</div>
<div class="a" style="left:66px;top:1045px;width:1846px;height:1px;background:#6a6a6a;"></div>
<div class="t" style="left:886px;top:1012.0px;height:24px;line-height:24px;font-size:16px;color:#cfcfcf;letter-spacing:0.386px;">Баланс:</div>
<div class="t" style="left:953px;top:1012.0px;height:24px;line-height:24px;font-size:16px;color:#f4f4f4;letter-spacing:0.1px;">$ 13 303.45</div>
<div class="a" style="left:1860px;top:1008px;width:1px;height:29px;background:#444;"></div>
<g></g>
<svg style="left:1877px;top:1011px" width="24" height="24" viewBox="-12 -12 24 24"><path d="M0-11L2.8-6.7 7.8-7.8 6.7-2.8 11 0 6.7 2.8 7.8 7.8 2.8 6.7 0 11-2.8 6.7-7.8 7.8-6.7 2.8-11 0-6.7-2.8-7.8-7.8-2.8-6.7z" fill="#cfcfcf"/><circle r="3.8" fill="#555"/></svg>
<div class="a" style="left:73px;top:1059px;width:8px;height:8px;border-radius:50%;background:#ff1010"></div>
<div class="t" style="left:89px;top:1052.0px;height:24px;line-height:24px;font-size:16px;color:#f0f0f0;letter-spacing:0.304px;">Неактивно (начало через 33:22:28)</div>
<div class="t" style="left:1414px;top:1052.0px;height:24px;line-height:24px;font-size:16px;color:#e8e8e8;letter-spacing:0.386px;">Текущее время:</div>
<div class="t" style="left:1544px;top:1052.0px;height:24px;line-height:24px;font-size:16px;color:#f0f0f0;letter-spacing:0.125px;">31/01/2026 12:37:31</div>
<div class="t" style="left:1708px;top:1052.0px;height:24px;line-height:24px;font-size:16px;color:#f0f0f0;letter-spacing:0.034px;">UTC+3</div>
<svg style="left:1773px;top:1059px" width="10" height="8"><path d="M0 0h10L5 8z" fill="#8a8a8a"/></svg>
<div class="a" style="left:1800px;top:1055px;width:1.5px;height:16px;background:#d0d0d0;"></div>
<div class="t" style="left:1810px;top:1052.0px;height:24px;line-height:24px;font-size:16px;color:#f0f0f0;letter-spacing:0.052px;">25 ms / 30 ms</div>
</body></html>
